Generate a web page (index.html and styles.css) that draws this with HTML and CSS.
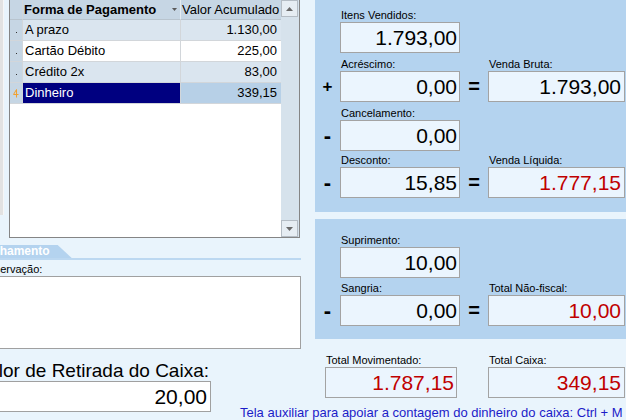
FILE: index.html
```html
<!DOCTYPE html>
<html lang="pt-BR">
<head>
<meta charset="utf-8">
<title>Fechamento de Caixa</title>
<link rel="stylesheet" href="styles.css">
</head>
<body>
<div class="screen">
  <div class="left">
    <div class="grid-area">
      <div class="edge"></div>
      <div class="grid">
        <div class="table">
          <div class="row head">
            <div class="ind"></div>
            <div class="c1">Forma de Pagamento<svg class="sort" width="5" height="3" viewBox="0 0 5 3"><path d="M0 0H5L2.5 3Z" fill="#5a5a5a"/></svg></div>
            <div class="c2">Valor Acumulado</div>
          </div>
          <div class="row alt">
            <div class="ind"><span class="dot"></span></div>
            <div class="c1">A prazo</div>
            <div class="c2 num">1.130,00</div>
          </div>
          <div class="row">
            <div class="ind"><span class="dot"></span></div>
            <div class="c1">Cartão Débito</div>
            <div class="c2 num">225,00</div>
          </div>
          <div class="row alt">
            <div class="ind"><span class="dot"></span></div>
            <div class="c1">Crédito 2x</div>
            <div class="c2 num">83,00</div>
          </div>
          <div class="row sel">
            <div class="ind"><svg width="6" height="9" viewBox="0 0 6 9"><path d="M3.5 0.5V8.5M0.5 5.5H5.5M0.5 5.5L3.5 0.5" stroke="#f0a030" stroke-width="1" fill="none"/></svg></div>
            <div class="c1">Dinheiro</div>
            <div class="c2 num">339,15</div>
          </div>
        </div>
        <div class="vscroll">
          <div class="sbtn"><svg width="7" height="4" viewBox="0 0 7 4"><path d="M0 4H7L3.5 0Z" fill="#6a6a6a"/></svg></div>
          <div class="track"></div>
          <div class="sbtn"><svg width="7" height="4" viewBox="0 0 7 4"><path d="M0 0H7L3.5 4Z" fill="#6a6a6a"/></svg></div>
        </div>
      </div>
    </div>

    <div class="tabstrip"><div class="tab">Fechamento</div></div>
    <div class="obs-label">Observação:</div>
    <div class="obs-box"></div>
    <div class="ret-label">Valor de Retirada do Caixa:</div>
    <div class="ret-row">
      <div class="ret-box">20,00</div>
      <div class="hint">Tela auxiliar para apoiar a contagem do dinheiro do caixa: Ctrl + M</div>
    </div>
  </div>

  <div class="right">
    <div class="panel panel-top">
      <div class="grp">
        <div class="lbl l2">Itens Vendidos:</div>
        <div class="box b2">1.793,00</div>
      </div>
      <div class="grp">
        <div class="lbl l2">Acréscimo:</div>
        <div class="lbl l4">Venda Bruta:</div>
        <div class="sign s1 plus">+</div>
        <div class="box b2">0,00</div>
        <div class="sign s3 eq">=</div>
        <div class="box b4">1.793,00</div>
      </div>
      <div class="grp">
        <div class="lbl l2">Cancelamento:</div>
        <div class="sign s1 minus">-</div>
        <div class="box b2">0,00</div>
      </div>
      <div class="grp grp-short">
        <div class="lbl l2">Desconto:</div>
        <div class="lbl l4">Venda Líquida:</div>
        <div class="sign s1 minus">-</div>
        <div class="box b2">15,85</div>
        <div class="sign s3 eq">=</div>
        <div class="box b4 red">1.777,15</div>
      </div>
    </div>

    <div class="panel panel-mid">
      <div class="grp">
        <div class="lbl l2">Suprimento:</div>
        <div class="box b2">10,00</div>
      </div>
      <div class="grp grp-mid">
        <div class="lbl l2">Sangria:</div>
        <div class="lbl l4">Total Não-fiscal:</div>
        <div class="sign s1 minus">-</div>
        <div class="box b2">0,00</div>
        <div class="sign s3 eq">=</div>
        <div class="box b4 red">10,00</div>
      </div>
    </div>

    <div class="totals">
      <div class="lbl l2">Total Movimentado:</div>
      <div class="lbl l4">Total Caixa:</div>
      <div class="box b2 red">1.787,15</div>
      <div class="box b4 red">349,15</div>
    </div>
  </div>
</div>
</body>
</html>
```

FILE: styles.css
```css
* { box-sizing: border-box; }
html, body { margin: 0; padding: 0; }
body {
  width: 626px;
  height: 420px;
  overflow: hidden;
  background: #e9f4fc;
  font-family: "Liberation Sans", Arial, sans-serif;
  color: #000;
}
.screen { display: flex; gap: 14px; height: 420px; }
.left { width: 301px; flex: none; display: flex; flex-direction: column; }
.right { width: 311px; flex: none; display: flex; flex-direction: column; }

/* grid */
.grid-area { display: flex; height: 238px; }
.edge { width: 4px; height: 215px; background: #e2e2e2; border-right: 1px solid #f6f6f6; }
.grid {
  margin-left: 5px;
  width: 291px;
  height: 238px;
  border: 1px solid #858585;
  border-top: none;
  background: #fff;
  display: flex;
}
.table { width: 271px; }
.row {
  display: grid;
  grid-template-columns: 13px 158px 100px;
  height: 21px;
  font-size: 13px;
  line-height: 20px;
  background: #fff;
}
.row > div { border-bottom: 1px solid #d2d6da; white-space: nowrap; overflow: hidden; }
.row .ind { background: #c6d6e4; border-right: 1px solid #d2d6da; display: flex; align-items: center; justify-content: center; }
.row .c1 { border-right: 1px solid #d2d6da; padding-left: 2px; }
.row .c2 { padding-left: 2px; }
.row .num { text-align: right; padding-right: 4px; }
.row.head { height: 20px; line-height: 19px; }
.row.head > div { background: #c6d6e4; border-bottom-color: #b8c4ce; }
.row.head .c1 { font-weight: bold; display: flex; align-items: center; justify-content: space-between; padding-left: 1px; border-right-color: #e4ecf2; }
.row.head .c2 { padding-left: 1px; }
.sort { margin-right: 3px; }
.row.alt > div:not(.ind) { background: #dae5ef; }
.row.sel .c1 { background: #000080; color: #fff; }
.row.sel .c2 { background: #b7d0e7; }
.dot { width: 1px; height: 1px; background: #333; margin-top: 4px; }

.vscroll { width: 18px; display: flex; flex-direction: column; background: #d6e2ec; }
.sbtn {
  height: 17px;
  margin: 0 1px 0 0;
  border: 1px solid #b4bcc4;
  background: #e6edf3;
  display: flex;
  align-items: center;
  justify-content: center;
}
.track { flex: 1; }

/* tab & observation */
.tabstrip { margin-top: 7px; height: 15px; border-bottom: 2px solid #bcd8f1; display: flex; }
.tab {
  margin-left: -21px;
  background: #b4d3ef;
  color: #fff;
  font-weight: bold;
  font-size: 12px;
  line-height: 13px;
  padding-right: 22px;
  clip-path: polygon(0 0, calc(100% - 14px) 0, 100% 100%, 0 100%);
}
.obs-label { height: 17px; padding-top: 3px; font-size: 11px; line-height: 13px; margin-left: -20px; white-space: nowrap; }
.obs-box { height: 76px; width: 303px; margin-left: -2px; border: 1px solid #a0a0a0; background: #fff; }
.ret-label { margin: 12px 0 0 -23px; font-size: 19px; line-height: 20px; white-space: nowrap; }
.ret-row { display: flex; align-items: flex-start; }
.ret-box {
  flex: none;
  width: 221px;
  height: 31px;
  margin-left: -10px;
  border: 1px solid #a0a0a0;
  background: #fff;
  font-size: 21px;
  line-height: 29px;
  text-align: right;
  padding-right: 3px;
}
.hint { margin: 24px 0 0 29px; font-size: 13px; line-height: 15px; color: #1c1cc8; white-space: nowrap; }

/* right panels */
.panel { background: #b4d3ef; }
.panel-top { padding: 4px 0 14px; }
.panel-mid { margin-top: 7px; padding: 10px 0 13px; }
.grp {
  display: grid;
  grid-template-columns: 25px 120px 28px 137px;
  grid-template-rows: 18px 31px;
}
.grp-short { grid-template-rows: 16px 31px; }
.grp-mid { grid-template-rows: 17px 31px; }
.totals {
  display: grid;
  grid-template-columns: 10px 132px 31px 137px;
  grid-template-rows: 28px 31px;
}
.lbl { grid-row: 1; align-self: end; font-size: 11px; line-height: 13px; white-space: nowrap; padding-left: 1px; }
.l2 { grid-column: 2; }
.l4 { grid-column: 4; }
.box {
  grid-row: 2;
  border: 1px solid #a3a3a3;
  background: #ebf5fe;
  font-size: 21px;
  line-height: 29px;
  text-align: right;
  padding-right: 2px;
  white-space: nowrap;
}
.b2 { grid-column: 2; }
.b4 { grid-column: 4; padding-right: 3px; }
.red { color: #c00000; }
.sign { grid-row: 2; display: flex; align-items: center; justify-content: center; font-weight: bold; }
.s1 { grid-column: 1; }
.s3 { grid-column: 3; }
.plus { font-size: 17px; }
.minus { font-size: 22px; }
.eq { font-size: 20px; }
```
